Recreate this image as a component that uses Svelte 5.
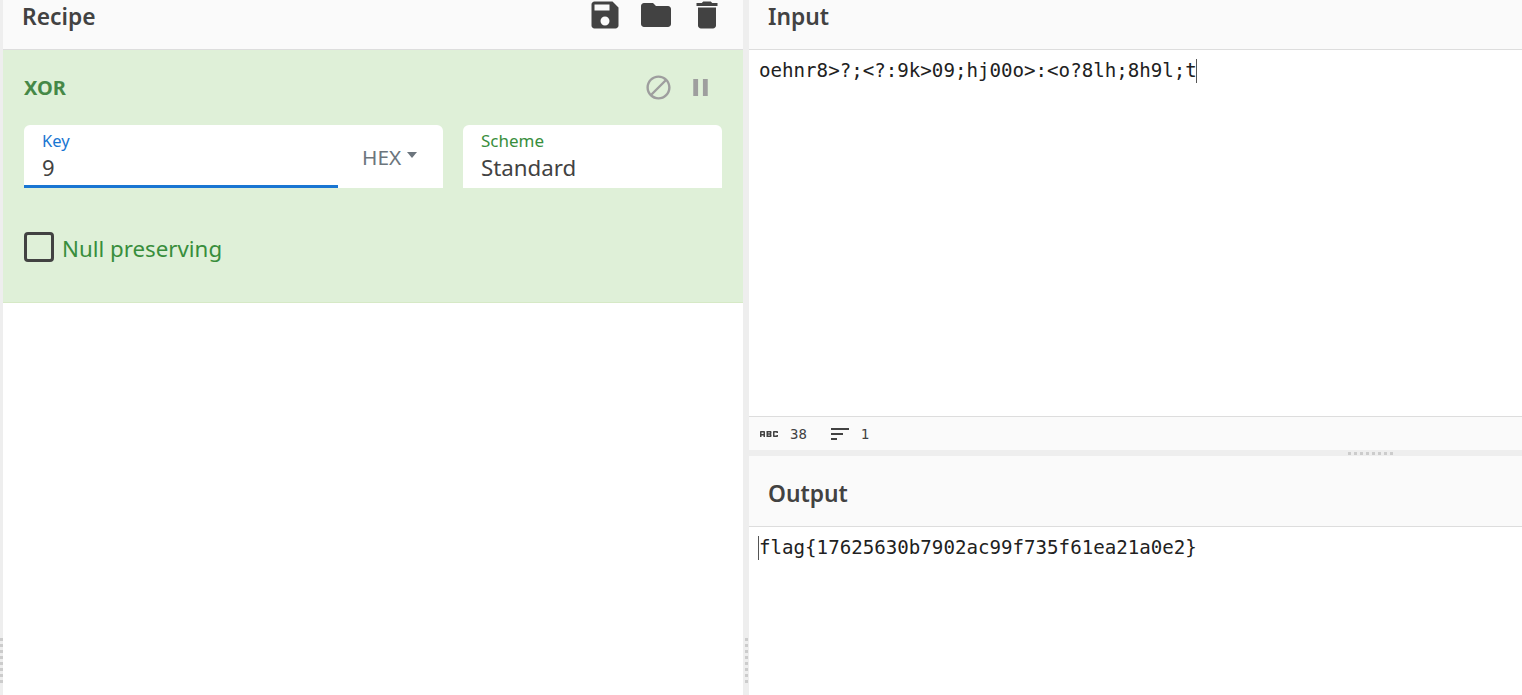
<script>
  const inputText = "oehnr8>?;<?:9k>09;hj00o>:<o?8lh;8h9l;t";
  const outputText = "flag{17625630b7902ac99f735f61ea21a0e2}";
  const dots = [0, 1, 2, 3, 4, 5, 6, 7];
</script>

<div class="page">
  <div class="gutter-v narrow">
    <div class="grip-v">
      {#each dots as d (d)}<span></span>{/each}
    </div>
  </div>

  <section class="recipe">
    <header class="head recipe-head">
      <h2>Recipe</h2>
      <div class="head-icons">
        <svg viewBox="0 0 24 24"><path d="M17 3H5c-1.11 0-2 .9-2 2v14c0 1.1.89 2 2 2h14c1.1 0 2-.9 2-2V7l-4-4zm-5 16c-1.66 0-3-1.34-3-3s1.34-3 3-3 3 1.34 3 3-1.34 3-3 3zm3-10H5V5h10v4z" /></svg>
        <svg viewBox="0 0 24 24"><path d="M10 4H4c-1.1 0-1.99.9-1.99 2L2 18c0 1.1.9 2 2 2h16c1.1 0 2-.9 2-2V8c0-1.1-.9-2-2-2h-8l-2-2z" /></svg>
        <svg viewBox="0 0 24 24"><path d="M6 19c0 1.1.9 2 2 2h8c1.1 0 2-.9 2-2V7H6v12zM19 4h-3.5l-1-1h-5l-1 1H5v2h14V4z" /></svg>
      </div>
    </header>

    <div class="op">
      <div class="op-title">
        <span class="op-name">XOR</span>
        <div class="op-icons">
          <svg viewBox="0 0 24 24"><path d="M12 2C6.48 2 2 6.48 2 12s4.48 10 10 10 10-4.48 10-10S17.52 2 12 2zM4 12c0-4.42 3.58-8 8-8 1.85 0 3.55.63 4.9 1.69L5.69 16.9C4.63 15.55 4 13.85 4 12zm8 8c-1.85 0-3.55-.63-4.9-1.69L18.31 7.1C19.37 8.45 20 10.15 20 12c0 4.42-3.58 8-8 8z" /></svg>
          <svg viewBox="0 0 24 24"><path d="M6 19h4V5H6v14zm8-14v14h4V5h-4z" /></svg>
        </div>
      </div>

      <div class="fields">
        <div class="field key">
          <div class="field-main">
            <span class="label">Key</span>
            <span class="value key-value">9</span>
          </div>
          <div class="hex">HEX<i class="caret"></i></div>
        </div>
        <div class="field scheme">
          <div class="field-main">
            <span class="label green">Scheme</span>
            <span class="value">Standard</span>
          </div>
        </div>
      </div>

      <div class="check">
        <span class="box"></span>
        <span class="check-label">Null preserving</span>
      </div>
    </div>
  </section>

  <div class="gutter-v wide">
    <div class="grip-v">
      {#each dots as d (d)}<span></span>{/each}
    </div>
  </div>

  <section class="io">
    <div class="pane input-pane">
      <header class="head io-head"><h2>Input</h2></header>
      <div class="editor">
        <span class="code">{inputText}</span><i class="cursor"></i>
      </div>
      <footer class="status">
        <svg class="abc" viewBox="0 0 24 24"><path d="M21 11h-1.5v-.5h-2v3h2V13H21v1c0 .55-.45 1-1 1h-3c-.55 0-1-.45-1-1v-4c0-.55.45-1 1-1h3c.55 0 1 .45 1 1v1zM8 10v5H6.5v-1.5h-2V15H3v-5c0-.55.45-1 1-1h3c.55 0 1 .45 1 1zm-1.5.5h-2V12h2v-1.5zm7 1.5c.55 0 1 .45 1 1v1c0 .55-.45 1-1 1h-4V9h4c.55 0 1 .45 1 1v1c0 .55-.45 1-1 1zM11 10.5v.75h2v-.75h-2zm2 2.25h-2v.75h2v-.75z" /></svg>
        <span class="num n-len">38</span>
        <svg class="lines" viewBox="0 0 24 24"><path d="M3 18h6v-2H3v2zM3 6v2h18V6H3zm0 7h12v-2H3v2z" /></svg>
        <span class="num">1</span>
      </footer>
    </div>

    <div class="gutter-h">
      <div class="grip-h">
        {#each dots as d (d)}<span></span>{/each}
      </div>
    </div>

    <div class="pane output-pane">
      <header class="head out-head"><h2>Output</h2></header>
      <div class="editor out">
        <i class="cursor"></i><span class="code">{outputText}</span>
      </div>
    </div>
  </section>
</div>

<style>
  :global(body) {
    margin: 0;
    background: #fff;
    overflow: hidden;
  }

  .page {
    display: flex;
    width: 1522px;
    height: 695px;
    overflow: hidden;
    font-family: "Noto Sans", "Open Sans", sans-serif;
    color: #424242;
  }

  /* gutters */
  .gutter-v {
    background: #eee;
    flex: none;
    display: flex;
    flex-direction: column;
    justify-content: flex-end;
    align-items: center;
    padding-bottom: 12px;
    box-sizing: border-box;
  }
  .gutter-v.narrow {
    width: 3px;
  }
  .gutter-v.wide {
    width: 6px;
  }
  .grip-v {
    display: flex;
    flex-direction: column;
    gap: 3px;
  }
  .grip-v span {
    display: block;
    width: 3px;
    height: 3px;
    background: #ccc;
  }
  .gutter-h {
    height: 6px;
    background: #eee;
    flex: none;
    display: flex;
    align-items: center;
    padding-left: 599px;
  }
  .grip-h {
    display: flex;
    gap: 3px;
  }
  .grip-h span {
    display: block;
    width: 3px;
    height: 3px;
    background: #ccc;
  }

  /* headers */
  .head {
    background: #fafafa;
    border-bottom: 1px solid #ddd;
    box-sizing: border-box;
    flex: none;
    display: flex;
    align-items: center;
  }
  .head h2 {
    margin: 0;
    font-size: 22.8px;
    font-weight: 600;
    color: #424242;
    line-height: 30px;
  }

  /* recipe */
  .recipe {
    width: 740px;
    flex: none;
    display: flex;
    flex-direction: column;
  }
  .recipe-head {
    height: 50px;
    padding: 0 18px 15px 19px;
    justify-content: space-between;
  }
  .head-icons {
    display: flex;
    gap: 15px;
    margin-top: -4px;
    height: 36px;
  }
  .head-icons svg {
    width: 36px;
    height: 36px;
    fill: #424242;
  }

  .op {
    background: #dff0d8;
    border-bottom: 1px solid #d6e9c6;
    height: 253px;
    box-sizing: border-box;
    padding: 0 21px;
  }
  .op-title {
    display: flex;
    justify-content: space-between;
    align-items: center;
    height: 75px;
  }
  .op-name {
    font-size: 20px;
    font-weight: 700;
    color: #468847;
  }
  .op-icons {
    display: flex;
    gap: 13px;
    margin-right: 7px;
  }
  .op-icons svg {
    width: 29px;
    height: 29px;
    fill: #9e9e9e;
  }

  .fields {
    display: flex;
    gap: 20px;
  }
  .field {
    height: 63px;
    background: #fff;
    border-radius: 6px 6px 0 0;
    display: flex;
    box-sizing: border-box;
  }
  .field.key {
    width: 419px;
  }
  .field.scheme {
    width: 259px;
  }
  .key .field-main {
    width: 314px;
    border-bottom: 3px solid #1976d2;
  }
  .field-main {
    box-sizing: border-box;
    padding-left: 18px;
    height: 63px;
    display: flex;
    flex-direction: column;
  }
  .label {
    font-size: 16.5px;
    line-height: 22px;
    margin-top: 5px;
    color: #1976d2;
  }
  .label.green {
    font-size: 17px;
    color: #388e3c;
  }
  .value {
    font-size: 22.3px;
    line-height: 32px;
    color: #424242;
  }
  .key-value {
    font-size: 22px;
    line-height: 30px;
  }
  .hex {
    display: flex;
    align-items: center;
    padding-left: 24px;
    font-size: 20.8px;
    color: #6c757d;
    height: 63px;
    box-sizing: border-box;
  }
  .caret {
    width: 0;
    height: 0;
    margin-left: 6px;
    margin-bottom: 3px;
    border-left: 5.5px solid transparent;
    border-right: 5.5px solid transparent;
    border-top: 6px solid #6c757d;
  }

  .check {
    display: flex;
    align-items: flex-start;
    gap: 8px;
    margin-top: 44px;
  }
  .box {
    width: 30px;
    height: 30px;
    box-sizing: border-box;
    border: 3px solid #424242;
    border-radius: 4px;
  }
  .check-label {
    font-size: 22.3px;
    color: #388e3c;
    line-height: 30px;
    padding-top: 2px;
  }

  /* io */
  .io {
    flex: 1;
    display: flex;
    flex-direction: column;
    min-width: 0;
  }
  .pane {
    display: flex;
    flex-direction: column;
  }
  .input-pane {
    height: 450px;
  }
  .output-pane {
    flex: 1;
  }
  .io-head {
    height: 50px;
    padding: 0 0 15px 19px;
  }
  .out-head {
    height: 71px;
    padding-left: 19px;
    padding-top: 6px;
  }
  .editor {
    flex: 1;
    padding: 9px 0 0 10px;
    display: flex;
    align-items: flex-start;
    height: 30px;
  }
  .code {
    font-family: "DejaVu Sans Mono", "Liberation Mono", monospace;
    font-size: 19.15px;
    line-height: 24px;
    color: #212121;
    white-space: pre;
  }
  .cursor {
    display: block;
    width: 1px;
    height: 24px;
    margin-left: -1px;
    background: #555;
    flex: none;
  }
  .status {
    height: 34px;
    flex: none;
    box-sizing: border-box;
    background: #fafafa;
    border-top: 1px solid #ddd;
    display: flex;
    align-items: center;
    padding-left: 8px;
  }
  .status svg {
    width: 24px;
    height: 24px;
    flex: none;
    fill: #424242;
  }
  .num {
    font-family: "DejaVu Sans Mono", monospace;
    font-size: 14px;
    color: #424242;
  }
  .abc {
    margin-right: 9px;
  }
  .n-len {
    margin-right: 21px;
  }
  .lines {
    margin-right: 9px;
  }
</style>
